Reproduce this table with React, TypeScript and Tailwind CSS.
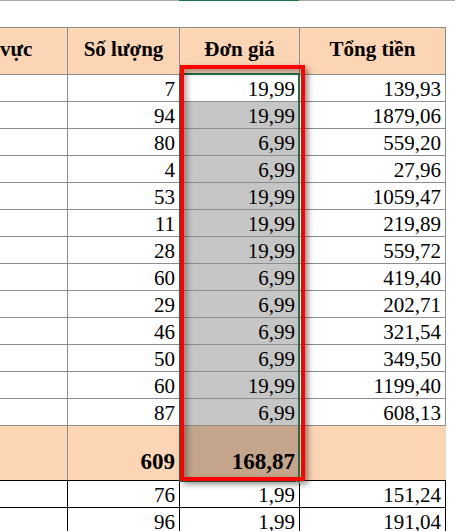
const rows: [string, string, string][] = [
  ["7", "19,99", "139,93"],
  ["94", "19,99", "1879,06"],
  ["80", "6,99", "559,20"],
  ["4", "6,99", "27,96"],
  ["53", "19,99", "1059,47"],
  ["11", "19,99", "219,89"],
  ["28", "19,99", "559,72"],
  ["60", "6,99", "419,40"],
  ["29", "6,99", "202,71"],
  ["46", "6,99", "321,54"],
  ["50", "6,99", "349,50"],
  ["60", "19,99", "1199,40"],
  ["87", "6,99", "608,13"],
];

const below: [string, string, string][] = [
  ["76", "1,99", "151,24"],
  ["96", "1,99", "191,04"],
];

const cell = "flex items-end justify-end pr-[4px] pb-[1px] leading-[21px] border-b border-r";

export default function App() {
  return (
    <div
      className="relative w-[455px] h-[531px] overflow-hidden bg-white text-black text-[21px]"
      style={{ fontFamily: '"Liberation Serif", "Times New Roman", serif' }}
    >
      {/* column header strip */}
      <div className="flex h-px">
        <div className="w-[179px] bg-[#ababab]" />
        <div className="w-[120px] bg-[#217346]" />
        <div className="flex-1 bg-[#ababab]" />
      </div>

      <div className="mt-[26px] w-[446px] border-t border-[#8c8c8c]">
        {/* header */}
        <div className="flex h-[47px] bg-[#fcd5b4] font-bold">
          <div className="w-[68px] flex items-center overflow-hidden border-b border-r border-[#8c8c8c] pb-[2px]">
            vực
          </div>
          <div className="w-[112px] flex items-center justify-center border-b border-r border-[#8c8c8c] pb-[2px]">
            Số lượng
          </div>
          <div className="w-[120px] flex items-center justify-center border-b border-r border-[#8c8c8c] pb-[2px]">
            Đơn giá
          </div>
          <div className="w-[146px] flex items-center justify-center border-b border-r border-[#8c8c8c] pb-[2px]">
            Tổng tiền
          </div>
        </div>

        {rows.map((r, i) => (
          <div key={i} className="flex h-[27px]">
            <div className={`w-[68px] ${cell} border-[#8c8c8c]`} />
            <div className={`w-[112px] ${cell} border-[#8c8c8c]`}>{r[0]}</div>
            <div className={`w-[120px] ${cell} border-[#8c8c8c] ${i === 0 ? "bg-white" : "bg-[#c6c6c6]"}`}>
              {r[1]}
            </div>
            <div className={`w-[146px] ${cell} border-[#8c8c8c]`}>{r[2]}</div>
          </div>
        ))}

        {/* total row */}
        <div className="flex h-[55px] bg-[#fcd5b4] font-bold text-[23px]">
          <div className="w-[68px] border-r border-r-[#8c8c8c] border-b border-b-black" />
          <div className="w-[112px] flex items-end justify-end pr-[4px] pb-[7px] leading-[23px] border-r border-r-[#8c8c8c] border-b border-b-black">
            609
          </div>
          <div className="w-[120px] flex items-end justify-end pr-[4px] pb-[7px] leading-[23px] bg-[#c4a58c] border-r border-r-[#8c8c8c] border-b border-b-black">
            168,87
          </div>
          <div className="w-[146px] border-b border-b-black" />
        </div>

        {below.map((r, i) => (
          <div key={i} className="flex h-[27px]">
            <div className={`w-[68px] ${cell} border-black`} />
            <div className={`w-[112px] ${cell} border-black`}>{r[0]}</div>
            <div className={`w-[120px] ${cell} border-black`}>{r[1]}</div>
            <div className={`w-[146px] ${cell} border-black`}>{r[2]}</div>
          </div>
        ))}
      </div>

      {/* Excel selection outline */}
      <div className="absolute left-[179px] top-[73px] w-[121px] h-[409px] border-2 border-[#217346]" />
      <div className="absolute left-[296px] top-[478px] w-[5px] h-[5px] bg-[#217346] border border-white" />

      {/* red highlight box */}
      <div className="absolute left-[180px] top-[65px] w-[125px] h-[416px] border-4 border-[#ff0000] shadow-[3px_3px_6px_rgba(0,0,0,0.45),inset_3px_3px_6px_rgba(0,0,0,0.35)]" />
    </div>
  );
}
